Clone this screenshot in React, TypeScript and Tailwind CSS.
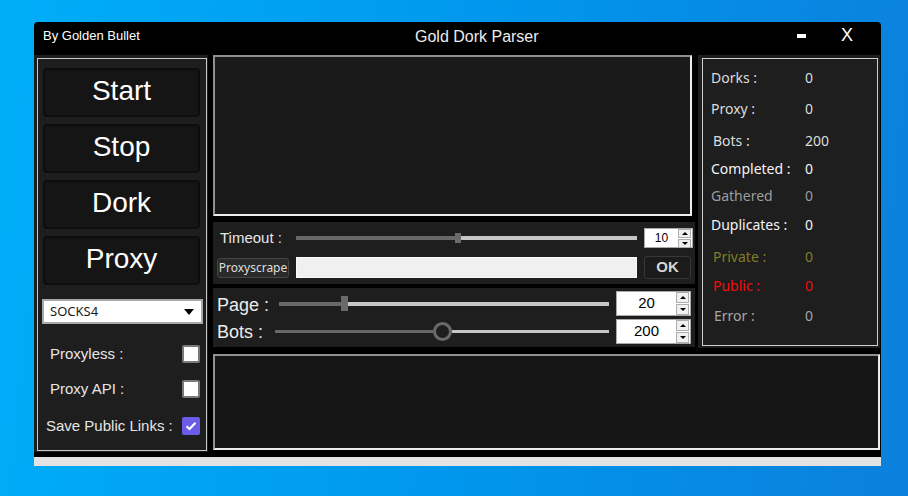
import React from 'react';

const arial = { fontFamily: '"Liberation Sans", Arial, sans-serif' };
const segoe = { fontFamily: '"Noto Sans", "Open Sans", sans-serif' };

function Slider({ left, thumb, right, round }: { left: string; thumb: string; right: string; round?: boolean }) {
  return (
    <div className="flex items-center">
      <div className={`${left} ${round ? 'h-[3px]' : 'h-[4px]'} bg-[#686868]`} />
      {round ? (
        <div className="w-[19px] h-[19px] rounded-full border-[3px] border-[#6a6a6a] bg-[#1e1e1e]" />
      ) : (
        <div className={`${thumb} bg-[#6a6a6a]`} />
      )}
      <div className={`${right} ${round ? 'h-[3px]' : 'h-[4px]'} bg-[#c6c6c6]`} />
    </div>
  );
}

function SpinArrows({ size }: { size: 'sm' | 'lg' }) {
  const h = size === 'sm' ? 'h-[9px]' : 'h-[11px]';
  return (
    <div className="flex flex-col gap-[1px] pr-[1px]">
      <div className={`w-[13px] ${h} bg-[#f0f0f0] border border-[#adadad] flex items-center justify-center`}>
        <div className="w-0 h-0 border-l-[3px] border-r-[3px] border-b-[3px] border-l-transparent border-r-transparent border-b-black" />
      </div>
      <div className={`w-[13px] ${h} bg-[#f0f0f0] border border-[#adadad] flex items-center justify-center`}>
        <div className="w-0 h-0 border-l-[3px] border-r-[3px] border-t-[3px] border-l-transparent border-r-transparent border-t-black" />
      </div>
    </div>
  );
}

function Spinner({ value, size }: { value: string; size: 'sm' | 'lg' }) {
  return (
    <div
      className={`${size === 'sm' ? 'w-[49px] h-[20px] text-[12px]' : 'w-[75px] h-[25px] text-[15px]'} bg-white border border-[#a8a8a8] flex items-center`}
      style={arial}
    >
      <span className="flex-1 text-center text-black">{value}</span>
      <SpinArrows size={size} />
    </div>
  );
}

function Check({ checked }: { checked?: boolean }) {
  if (checked) {
    return (
      <div className="w-[18px] h-[18px] rounded-[2px] bg-[#6a5ce8] flex items-center justify-center">
        <svg width="12" height="10" viewBox="0 0 12 10">
          <path d="M1.5 5.2 L4.5 8 L10.5 1.8" stroke="white" strokeWidth="2.2" fill="none" />
        </svg>
      </div>
    );
  }
  return <div className="w-[18px] h-[18px] rounded-[2px] border-2 border-[#7a7a7a] bg-white" />;
}

const stats = [
  { label: 'Dorks :', value: '0', color: 'text-[#dcdcdc]', mt: 'mt-[7px]', lx: 'pl-[8px]' },
  { label: 'Proxy :', value: '0', color: 'text-[#dcdcdc]', mt: 'mt-[11px]', lx: 'pl-[8px]' },
  { label: 'Bots :', value: '200', color: 'text-[#dcdcdc]', mt: 'mt-[12px]', lx: 'pl-[10px]' },
  { label: 'Completed :', value: '0', color: 'text-[#f4f4f4]', mt: 'mt-[8px]', lx: 'pl-[8px]' },
  { label: 'Gathered', value: '0', color: 'text-[#9c9c9c]', mt: 'mt-[7px]', lx: 'pl-[8px]' },
  { label: 'Duplicates :', value: '0', color: 'text-[#f4f4f4]', mt: 'mt-[9px]', lx: 'pl-[8px]' },
  { label: 'Private :', value: '0', color: 'text-[#7e7e22]', mt: 'mt-[12px]', lx: 'pl-[10px]' },
  { label: 'Public :', value: '0', color: 'text-[#f20c0c]', mt: 'mt-[9px]', lx: 'pl-[10px]' },
  { label: 'Error :', value: '0', color: 'text-[#a6a6a6]', mt: 'mt-[10px]', lx: 'pl-[11px]' },
];

export default function App() {
  return (
    <div className="w-[908px] h-[496px] overflow-hidden pl-[34px] pt-[22px] bg-[linear-gradient(96deg,#00aef8_0%,#0098ee_50%,#0b80dc_100%)]">
      <div className="w-[847px] flex flex-col">
        {/* Title bar */}
        <div className="h-[33px] bg-black rounded-t-[4px] flex items-center text-white" style={arial}>
          <div className="w-[381px] pl-[9px] text-[13px] -mt-[6px]">By Golden Bullet</div>
          <div className="text-[16px] text-[#ececec] -mt-[4px]">Gold Dork Parser</div>
          <div className="ml-auto flex items-center -mt-[6px]">
            <div className="w-[9px] h-[4px] bg-white mt-[1px]" />
            <div className="ml-[35px] mr-[28px] text-[18px]">X</div>
          </div>
        </div>

        {/* Body */}
        <div className="h-[402px] bg-black flex">
          {/* Left panel */}
          <div className="w-[174px] h-[397px] bg-[#1e1e1e] pl-[3px] pt-[3px] pr-[1px] pb-[1px]">
            <div className="h-full border border-[#c9c9c9] pt-[9px]" style={arial}>
              <div className="pl-[5px] flex flex-col gap-[7px]">
                {['Start', 'Stop', 'Dork', 'Proxy'].map((b) => (
                  <div
                    key={b}
                    className="w-[157px] h-[49px] bg-[#151515] border-2 border-[#0d0d0d] rounded-[4px] flex items-center justify-center pb-[3px] text-[28px] text-white"
                  >
                    {b}
                  </div>
                ))}
              </div>
              <div className="ml-[4px] mt-[14px] w-[161px] h-[25px] bg-white border-2 border-[#a9a9a9] flex items-center justify-between pl-[6px] pr-[7px]">
                <span className="text-[13px] text-[#1a1a1a]" style={segoe}>SOCKS4</span>
                <div className="w-0 h-0 border-l-[5px] border-r-[5px] border-t-[6px] border-l-transparent border-r-transparent border-t-black" />
              </div>
              <div className="mt-[21px] flex items-center justify-between pl-[12px] pr-[6px] h-[18px]">
                <span className="text-[15px] text-[#e6e6e6]">Proxyless :</span>
                <Check />
              </div>
              <div className="mt-[17px] flex items-center justify-between pl-[12px] pr-[6px] h-[18px]">
                <span className="text-[15px] text-[#e6e6e6]">Proxy API :</span>
                <Check />
              </div>
              <div className="mt-[19px] flex items-center justify-between pl-[8px] pr-[6px] h-[18px]">
                <span className="text-[15px] text-[#e6e6e6]">Save Public Links :</span>
                <Check checked />
              </div>
            </div>
          </div>

          {/* Right area */}
          <div className="ml-[5px] flex flex-col">
            <div className="flex">
              {/* Center column */}
              <div className="w-[482px] flex flex-col">
                <div className="w-[479px] h-[161px] bg-[#1a1a1a] border-2 border-t-[#909090] border-l-[#909090] border-r-[#ededed] border-b-[#ededed]" />

                <div className="mt-[6px] h-[62px] bg-[#1e1e1e] flex flex-col" style={arial}>
                  <div className="mt-[6px] h-[20px] flex items-center pl-[7px]">
                    <span className="w-[76px] text-[15px] text-[#e6e6e6]">Timeout :</span>
                    <Slider left="w-[159px]" thumb="w-[6px] h-[10px]" right="w-[176px]" />
                    <div className="ml-[7px]">
                      <Spinner value="10" size="sm" />
                    </div>
                  </div>
                  <div className="mt-[8px] h-[23px] flex items-center pl-[4px]">
                    <div
                      className="w-[72px] h-[20px] bg-[#2a2a2a] border border-[#454545] rounded-[3px] flex items-center justify-center text-[12px] text-[#dedede]"
                      style={segoe}
                    >
                      Proxyscrape
                    </div>
                    <div className="ml-[7px] w-[341px] h-[21px] bg-[#f0f0f0] border border-[#fafafa]" />
                    <div className="ml-[7px] w-[47px] h-[23px] bg-[#1b1b1b] border border-[#383838] rounded-[3px] flex items-center justify-center text-[15px] font-bold text-[#d6d6d6]">
                      OK
                    </div>
                  </div>
                </div>

                <div className="mt-[4px] h-[59px] bg-[#1e1e1e] flex flex-col" style={arial}>
                  <div className="mt-[3px] h-[25px] flex items-center pl-[4px]">
                    <span className="w-[62px] text-[18px] text-[#ececec] pt-[3px]">Page :</span>
                    <Slider left="w-[62px]" thumb="w-[7px] h-[15px]" right="w-[261px]" />
                    <div className="ml-[7px]">
                      <Spinner value="20" size="lg" />
                    </div>
                  </div>
                  <div className="mt-[3px] h-[25px] flex items-center pl-[4px]">
                    <span className="w-[58px] text-[18px] text-[#ececec] pt-[1px]">Bots :</span>
                    <Slider left="w-[158px]" thumb="" right="w-[157px]" round />
                    <div className="ml-[7px]">
                      <Spinner value="200" size="lg" />
                    </div>
                  </div>
                </div>
              </div>

              {/* Stats panel */}
              <div className="ml-[3px] w-[182px] h-[293px] bg-[#1e1e1e] pl-[4px] pt-[3px] pr-[2px] pb-[2px]">
                <div className="h-full border border-[#cfcfcf] flex flex-col pt-[1px]" style={segoe}>
                  {stats.map((s) => (
                    <div key={s.label} className={`${s.mt} h-[20px] flex items-center text-[14px] ${s.color}`}>
                      <span className={`${s.lx} w-[102px]`}>{s.label}</span>
                      <span>{s.value}</span>
                    </div>
                  ))}
                </div>
              </div>
            </div>

            {/* Bottom log box */}
            <div className="mt-[6px] w-[667px] h-[96px] bg-[#161616] border-2 border-t-[#909090] border-l-[#909090] border-r-[#ededed] border-b-[#ededed]" />
          </div>
        </div>

        <div className="h-[9px] bg-[#e3e3e3]" />
      </div>
    </div>
  );
}
